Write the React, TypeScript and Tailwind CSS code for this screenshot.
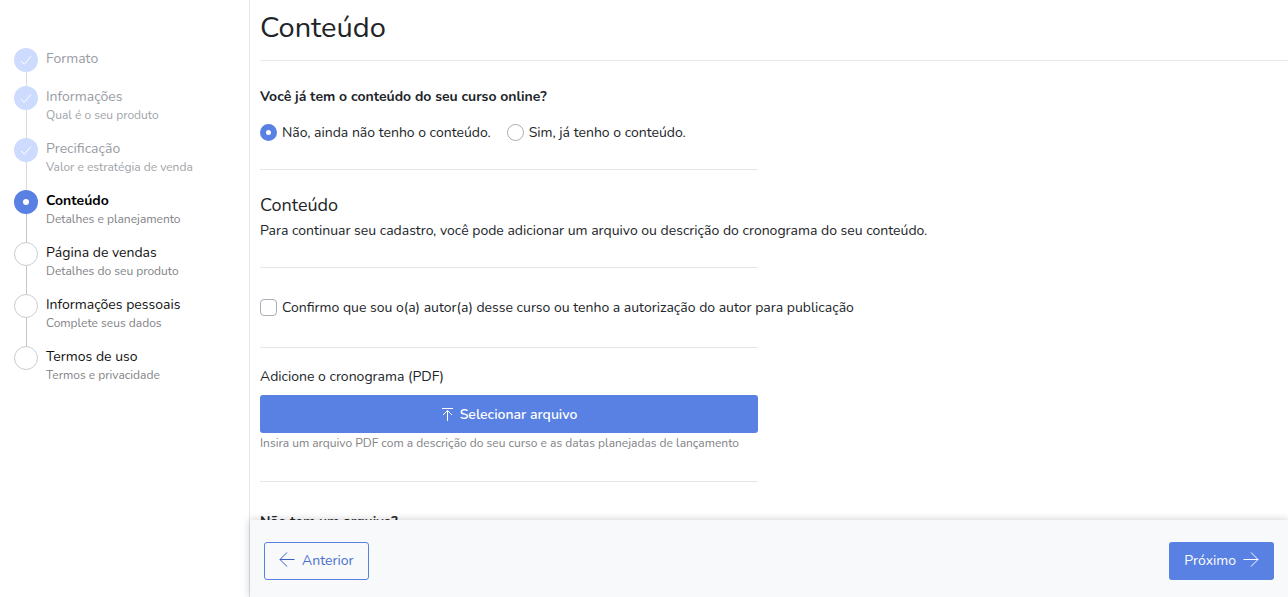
import React from 'react';
import clsx from 'clsx';

type StepStatus = 'done' | 'current' | 'pending';

interface Step {
  title: string;
  description?: string;
  status: StepStatus;
}

const steps: Step[] = [
  { title: 'Formato', status: 'done' },
  { title: 'Informações', description: 'Qual é o seu produto', status: 'done' },
  { title: 'Precificação', description: 'Valor e estratégia de venda', status: 'done' },
  { title: 'Conteúdo', description: 'Detalhes e planejamento', status: 'current' },
  { title: 'Página de vendas', description: 'Detalhes do seu produto', status: 'pending' },
  { title: 'Informações pessoais', description: 'Complete seus dados', status: 'pending' },
  { title: 'Termos de uso', description: 'Termos e privacidade', status: 'pending' },
];

const StepMarker = ({ status }: { status: StepStatus }) => (
  <span
    className={clsx(
      'flex size-6 shrink-0 items-center justify-center rounded-full',
      status === 'done' && 'bg-[#cddbff]',
      status === 'current' && 'bg-[#5881e3]',
      status === 'pending' && 'border border-[#c9ccd2] bg-white',
    )}
  >
    {status === 'done' && (
      <svg width="12" height="12" viewBox="0 0 12 12" fill="none" stroke="#fff" aria-hidden="true">
        <path d="M1 7 4.3 10.3 11 2.3" />
      </svg>
    )}
    {status === 'current' && <span className="size-1.5 rounded-full bg-white" />}
  </span>
);

const StepItem = ({ step, last }: { step: Step; last: boolean }) => (
  <li className="flex gap-2" aria-current={step.status === 'current' ? 'step' : undefined}>
    <div className="flex flex-col items-center">
      <StepMarker status={step.status} />
      {!last && (
        <span
          className={clsx('w-px grow', step.status === 'done' ? 'bg-[#d9dade]' : 'bg-[#c5c6ca]')}
        />
      )}
    </div>
    <div className="min-h-[38px] pb-3.5">
      <p
        className={clsx(
          'text-sm leading-[21px]',
          step.status === 'done' && 'text-[#999ca3]',
          step.status === 'current' && 'font-bold text-black',
          step.status === 'pending' && 'text-[#111]',
        )}
      >
        {step.title}
      </p>
      {step.description && (
        <p
          className={clsx(
            'text-xs leading-[17px]',
            step.status === 'done' ? 'text-[#a0a3a8]' : 'text-[#7f8286]',
          )}
        >
          {step.description}
        </p>
      )}
    </div>
  </li>
);

const UploadIcon = () => (
  <svg width="13" height="14" viewBox="0 0 13 14" fill="none" stroke="currentColor" aria-hidden="true">
    <path d="M1 1.5h11M6.5 14V3.5M2 8l4.5-4.5L11 8" />
  </svg>
);

const ArrowIcon = ({ className }: { className?: string }) => (
  <svg
    width="16"
    height="16"
    viewBox="0 0 16 16"
    fill="none"
    stroke="currentColor"
    className={clsx('mb-1', className)}
    aria-hidden="true"
  >
    <path d="M15.5 8.5H1M8 1.5l-7 7 7 7" />
  </svg>
);

const radioClass =
  'size-[17px] shrink-0 appearance-none rounded-full border border-[#a9adb5] bg-white checked:border-[6px] checked:border-[#5881e3]';

export default function App() {
  return (
    <div className="flex h-screen bg-white font-['Nunito','Open_Sans',sans-serif] text-[#212529]">
      <aside className="w-[249px] shrink-0 overflow-hidden pt-12 pl-3.5">
        <ol>
          {steps.map((step, index) => (
            <StepItem key={step.title} step={step} last={index === steps.length - 1} />
          ))}
        </ol>
      </aside>

      <div className="flex min-w-0 grow flex-col border-l border-[#e3e5e9]">
        <main className="min-h-0 grow overflow-hidden pl-2.5 text-sm leading-[21px]">
          <header className="border-b border-[#e6e7ea] pt-2.5 pb-3.5">
            <h1 className="text-[29px] leading-9">Conteúdo</h1>
          </header>

          <fieldset className="pt-[25px]">
            <legend className="contents font-bold">Você já tem o conteúdo do seu curso online?</legend>
            <div className="mt-[15px] flex gap-4">
              <label className="flex items-center gap-[5px]">
                <input type="radio" name="content" defaultChecked className={radioClass} />
                Não, ainda não tenho o conteúdo.
              </label>
              <label className="flex items-center gap-[5px]">
                <input type="radio" name="content" className={radioClass} />
                Sim, já tenho o conteúdo.
              </label>
            </div>
          </fieldset>

          <div className="w-1/2 pr-4">
            <hr className="mt-[26px] border-[#e6e6e6]" />
          </div>
          <h2 className="mt-[23px] text-lg leading-6">Conteúdo</h2>
          <p className="mt-[3px]">
            Para continuar seu cadastro, você pode adicionar um arquivo ou descrição do cronograma do seu conteúdo.
          </p>
          <div className="w-1/2 pr-4">
            <hr className="mt-[26px] border-[#e6e6e6]" />
          </div>
          <label className="mt-[29px] flex items-center gap-[5px]">
            <input
              type="checkbox"
              className="size-[17px] shrink-0 appearance-none rounded border border-[#a9adb5] bg-white checked:bg-[#5881e3]"
            />
            Confirmo que sou o(a) autor(a) desse curso ou tenho a autorização do autor para publicação
          </label>

          <div className="w-1/2 pr-4">
            <hr className="mt-[29px] border-[#e6e6e6]" />
            <p id="schedule" className="mt-[18px]">Adicione o cronograma (PDF)</p>
            <button
              type="button"
              aria-describedby="schedule"
              className="mt-2 flex h-[38px] w-full items-center justify-center gap-1.5 rounded-[3px] bg-[#5881e3] font-semibold text-white"
            >
              <UploadIcon />
              Selecionar arquivo
            </button>
            <p className="mt-0.5 text-xs leading-[17px] whitespace-nowrap text-[#7f8286]">
              Insira um arquivo PDF com a descrição do seu curso e as datas planejadas de lançamento
            </p>
            <hr className="mt-[29px] border-[#e6e6e6]" />
            <p className="mt-[29px] font-bold">Não tem um arquivo?</p>
          </div>
        </main>

        <footer className="relative flex items-center justify-between bg-[#f8f9fb] px-3.5 pt-[22px] pb-[17px] text-sm shadow-[0_0_8px_rgba(0,0,0,0.2)]">
          <button
            type="button"
            className="flex h-[38px] items-center gap-[7px] rounded-[3px] border border-[#5881e3] px-3.5 text-[#4a70cc]"
          >
            <ArrowIcon className="text-[#3560c8]" />
            Anterior
          </button>
          <button
            type="button"
            className="flex h-[38px] items-center gap-[7px] rounded-[3px] bg-[#5881e3] px-[15px] text-white"
          >
            Próximo
            <ArrowIcon className="-scale-x-100" />
          </button>
        </footer>
      </div>
    </div>
  );
}
